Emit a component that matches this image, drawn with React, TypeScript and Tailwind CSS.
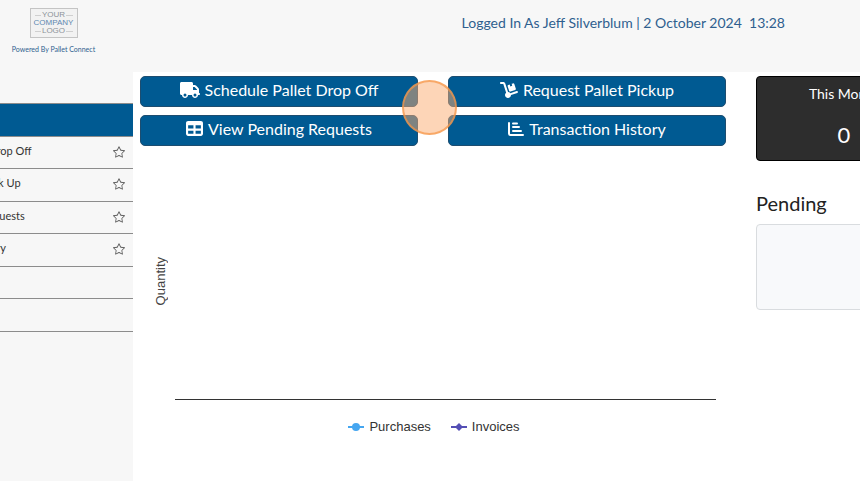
import React from "react";
import { FaTruck, FaTable, FaDolly } from "react-icons/fa6";
import { BsStar } from "react-icons/bs";

const menu = [
  "Schedule Pallet Drop Off",
  "Request Pallet Pick Up",
  "View Pending Requests",
  "Transaction History",
];

function BarsIcon({ size }: { size: number }) {
  return (
    <svg width={size} height={size} viewBox="0 0 16 16" fill="none" stroke="currentColor" strokeWidth="2" strokeLinecap="round">
      <path d="M1 2v10.500q0 1.500 1.500 1.500H15M5 2.500h4M5 6h6M5 10h8" />
    </svg>
  );
}

const actions = [
  { label: "Schedule Pallet Drop Off", Icon: FaTruck, size: 20 },
  { label: "Request Pallet Pickup", Icon: FaDolly, size: 18 },
  { label: "View Pending Requests", Icon: FaTable, size: 17 },
  { label: "Transaction History", Icon: BarsIcon, size: 16 },
];

function Logo() {
  return (
    <div className="flex h-[30px] w-12 flex-col items-center justify-center border border-[#c4c4c4] bg-[#f2f2f2] font-['Liberation_Sans',sans-serif] text-[8px] leading-[8px] text-[#8d9299]">
      <div className="flex w-full items-center justify-center gap-px px-1">
        <span className="h-px grow bg-[#cfcfcf]" />
        YOUR
        <span className="h-px grow bg-[#cfcfcf]" />
      </div>
      <div className="text-[#6088b0]">COMPANY</div>
      <div className="flex w-full items-center justify-center gap-px px-1">
        <span className="h-px grow bg-[#cfcfcf]" />
        LOGO
        <span className="h-px grow bg-[#cfcfcf]" />
      </div>
    </div>
  );
}

function Header() {
  return (
    <header className="flex h-[72px] shrink-0 items-start justify-between bg-[#f7f7f7] pr-[75px] text-[#2f5f8f]">
      <div className="flex w-[107px] flex-col items-center pt-2">
        <Logo />
        <div className="mt-[6px] text-[7px] leading-[10px] whitespace-nowrap">Powered By Pallet Connect</div>
      </div>
      <div className="pt-[13px] text-sm leading-5 whitespace-nowrap">
        Logged In As Jeff Silverblum&nbsp;| 2 October 2024&nbsp; 13:28
      </div>
    </header>
  );
}

function Sidebar() {
  return (
    <nav className="flex w-[133px] shrink-0 justify-end overflow-hidden bg-[#f7f7f7] pt-[31px]">
      <ul className="w-[221px] shrink-0 text-[11px] text-[#333]">
        <li className="h-[34px] border-y border-[#8c8c8c] bg-[#005a92]" />
        {menu.map((label) => (
          <li key={label} className="h-8 border-b border-[#8c8c8c] odd:h-[33px]">
            <a href="#" className="flex h-[29px] items-center justify-between pr-2">
              <span className="whitespace-nowrap">{label}</span>
              <BsStar size={12} className="text-[#555]" />
            </a>
          </li>
        ))}
        <li className="h-8 border-b border-[#8c8c8c]" />
        <li className="h-[33px] border-b border-[#8c8c8c]" />
      </ul>
    </nav>
  );
}

function Chart() {
  return (
    <section className="pt-[9px] pr-[10px]">
      <div className="flex h-[245px]">
        <div className="flex w-[35px] items-center justify-center pt-2 pl-[6px] font-['Liberation_Sans',sans-serif] text-[13px] leading-[18px] text-[#444]">
          <span className="rotate-180 [writing-mode:vertical-rl]">Quantity</span>
        </div>
        <div className="grow border-b border-[#333]" />
      </div>
      <div className="flex justify-center gap-5 pt-[18px] pl-3 font-['Liberation_Sans',sans-serif] text-[13px] leading-[18px] text-[#333]">
        <div className="flex items-center gap-[5px]">
          <svg width="16" height="10" viewBox="0 0 16 10">
            <path d="M0 5h16" stroke="#45a6f0" strokeWidth="2" />
            <circle cx="8" cy="5" r="4" fill="#45a6f0" />
          </svg>
          Purchases
        </div>
        <div className="flex items-center gap-[5px]">
          <svg width="16" height="10" viewBox="0 0 16 10">
            <path d="M0 5h16" stroke="#544fb5" strokeWidth="2" />
            <path d="M8 1l4 4-4 4-4-4z" fill="#544fb5" />
          </svg>
          Invoices
        </div>
      </div>
    </section>
  );
}

export default function App() {
  return (
    <div className="relative flex min-h-screen flex-col overflow-hidden bg-white font-[Lato,sans-serif]">
      <Header />
      <div className="flex grow">
        <Sidebar />
        <main className="flex min-w-0 grow gap-[30px] pt-1 pl-[7px]">
          <div className="min-w-0 grow">
            <div className="grid grid-cols-2 gap-x-[30px] gap-y-2">
              {actions.map(({ label, Icon, size }) => (
                <button key={label} className="flex h-[31px] items-center justify-center gap-[5px] rounded-[5px] border border-[#1d4d70] bg-[#005a92] pb-1 text-base leading-6 whitespace-nowrap text-white">
                  <Icon size={size} />
                  {label}
                </button>
              ))}
            </div>
            <Chart />
          </div>
          <aside className="flex w-[104px] shrink-0 flex-col">
            <div className="w-[176px]">
              <div className="flex h-[85px] flex-col items-center rounded border border-black bg-[#2d2d2d] pt-[7px] text-white">
                <div className="text-sm leading-5">This Month</div>
                <div className="mt-[17px] text-[22px] leading-7">0</div>
              </div>
              <h2 className="mt-7 text-xl leading-7 text-[#222]">Pending</h2>
              <div className="mt-[7px] h-[86px] rounded border border-[#d9dcdf] bg-[#f8f9fb]" />
            </div>
          </aside>
        </main>
      </div>
      <div className="absolute top-[80px] left-[402px] size-[55px] rounded-full border-2 border-[#f79646]/70 bg-[#fbac70]/50" />
    </div>
  );
}
